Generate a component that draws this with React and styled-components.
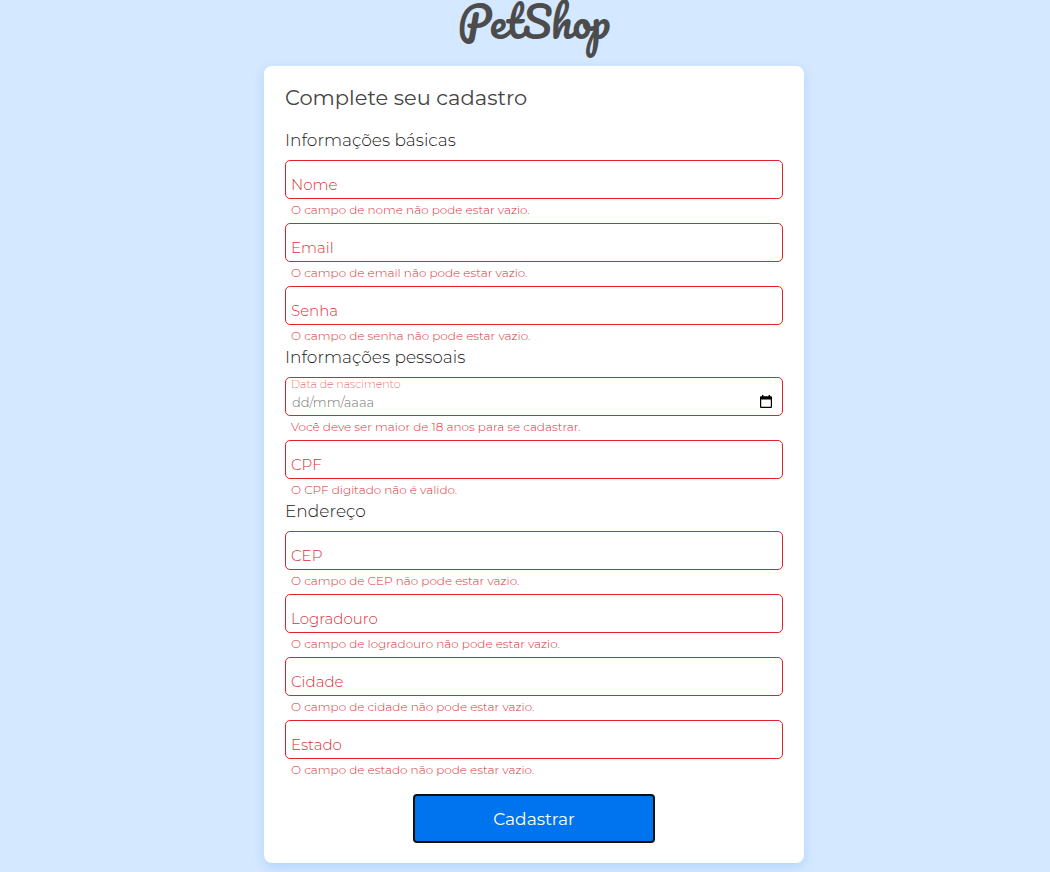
import React from "react";
import styled, { createGlobalStyle } from "styled-components";

const GlobalStyle = createGlobalStyle`
  *, *::before, *::after { box-sizing: border-box; }
  body {
    margin: 0;
    background: #d4e8ff;
    color: #444;
    font-family: Montserrat, Inter, "Open Sans", sans-serif;
    font-weight: 300;
  }
`;

const Page = styled.main`
  display: flex;
  flex-direction: column;
  align-items: center;
  min-height: 100vh;
  padding: 0 0 9px 18px;
`;

const Logo = styled.h1`
  margin: 0;
  height: 66px;
  font-family: Pacifico, Lato, cursive;
  font-size: 42px;
  font-weight: 400;
  line-height: 42px;
  color: #4c4c4c;
`;

const Card = styled.form`
  display: flex;
  flex-direction: column;
  width: 100%;
  max-width: 540px;
  padding: 20px 21px;
  border-radius: 8px;
  background: #fff;
  box-shadow: 0 4px 12px rgba(0, 115, 238, 0.16);
`;

const Title = styled.h2`
  margin: 0 0 20px;
  font-size: 21px;
  font-weight: 400;
  line-height: 24px;
`;

const Section = styled.fieldset`
  min-width: 0;
  margin: 0;
  padding: 0;
  border: 0;
`;

const SectionTitle = styled.legend`
  display: block;
  margin-bottom: 10px;
  padding: 0;
  font-size: 17px;
  font-weight: 300;
  line-height: 20px;
  color: #222;
`;

const FieldGroup = styled.div`
  padding-bottom: 5px;

  &:last-child {
    padding-bottom: 3px;
  }
`;

const FieldBox = styled.div`
  display: grid;
  grid-template-columns: 1fr auto;
`;

const Label = styled.label`
  grid-area: 1 / 1;
  align-self: ${(p) => (p.$floating ? "start" : "end")};
  padding: ${(p) => (p.$floating ? "0 6px" : "0 6px 4px")};
  font-size: ${(p) => (p.$floating ? "11px" : "15px")};
  font-weight: ${(p) => (p.$floating ? 200 : 300)};
  line-height: ${(p) => (p.$floating ? "14px" : "20px")};
  color: #dc2f36;
  pointer-events: none;
  z-index: 1;
`;

const Input = styled.input`
  grid-area: 1 / 1 / 2 / 3;
  width: 100%;
  height: 39px;
  padding: 11px 6px 0;
  border: 1px solid #e0232b;
  border-radius: 5px;
  background: #fff;
  font: inherit;
  font-size: 13px;
  color: #4a4a4a;

  &::placeholder {
    color: #757575;
    opacity: 1;
  }
`;

const PickerButton = styled.button`
  grid-area: 1 / 2;
  align-self: end;
  z-index: 1;
  display: flex;
  margin: 0 10px 7px 0;
  padding: 0;
  border: 0;
  background: none;
`;

const ErrorText = styled.p`
  margin: 0;
  padding: 3px 6px 0;
  font-size: 12px;
  line-height: 16px;
  color: #dc2f36;
`;

const SubmitButton = styled.button`
  align-self: center;
  width: 242px;
  max-width: 100%;
  height: 49px;
  margin-top: 13px;
  border: 2px solid #101010;
  border-radius: 4px;
  background: #0073ee;
  font: inherit;
  font-size: 17px;
  font-weight: 400;
  color: #fff;
`;

function CalendarIcon() {
  return (
    <svg width="14" height="14" viewBox="0 0 14 14" aria-hidden="true">
      <path
        fill="#000"
        fillRule="evenodd"
        d="M3 0h1.400v1.300h5.200V0H11v1.300h1q1 0 1 1V12q0 1-1 1H2q-1 0-1-1V2.300q0-1 1-1h1zM2.200 4.400v7.400h9.600V4.400z"
      />
    </svg>
  );
}

const sections = [
  {
    title: "Informações básicas",
    fields: [
      { id: "nome", label: "Nome", error: "O campo de nome não pode estar vazio." },
      { id: "email", label: "Email", type: "email", error: "O campo de email não pode estar vazio." },
      { id: "senha", label: "Senha", type: "password", error: "O campo de senha não pode estar vazio." },
    ],
  },
  {
    title: "Informações pessoais",
    fields: [
      {
        id: "nascimento",
        label: "Data de nascimento",
        placeholder: "dd/mm/aaaa",
        date: true,
        error: "Você deve ser maior de 18 anos para se cadastrar.",
      },
      { id: "cpf", label: "CPF", error: "O CPF digitado não é valido." },
    ],
  },
  {
    title: "Endereço",
    fields: [
      { id: "cep", label: "CEP", error: "O campo de CEP não pode estar vazio." },
      { id: "logradouro", label: "Logradouro", error: "O campo de logradouro não pode estar vazio." },
      { id: "cidade", label: "Cidade", error: "O campo de cidade não pode estar vazio." },
      { id: "estado", label: "Estado", error: "O campo de estado não pode estar vazio." },
    ],
  },
];

function Field({ id, label, type = "text", placeholder, date, error }) {
  return (
    <FieldGroup>
      <FieldBox>
        <Label htmlFor={id} $floating={date}>{label}</Label>
        <Input id={id} name={id} type={type} placeholder={placeholder} aria-invalid="true" aria-describedby={`${id}-erro`} />
        {date && (
          <PickerButton type="button" aria-label="Abrir calendário">
            <CalendarIcon />
          </PickerButton>
        )}
      </FieldBox>
      <ErrorText id={`${id}-erro`}>{error}</ErrorText>
    </FieldGroup>
  );
}

export default function App() {
  return (
    <>
      <GlobalStyle />
      <Page>
        <Logo>PetShop</Logo>
        <Card noValidate onSubmit={(e) => e.preventDefault()}>
          <Title>Complete seu cadastro</Title>
          {sections.map((section) => (
            <Section key={section.title}>
              <SectionTitle>{section.title}</SectionTitle>
              {section.fields.map((field) => (
                <Field key={field.id} {...field} />
              ))}
            </Section>
          ))}
          <SubmitButton type="submit">Cadastrar</SubmitButton>
        </Card>
      </Page>
    </>
  );
}
